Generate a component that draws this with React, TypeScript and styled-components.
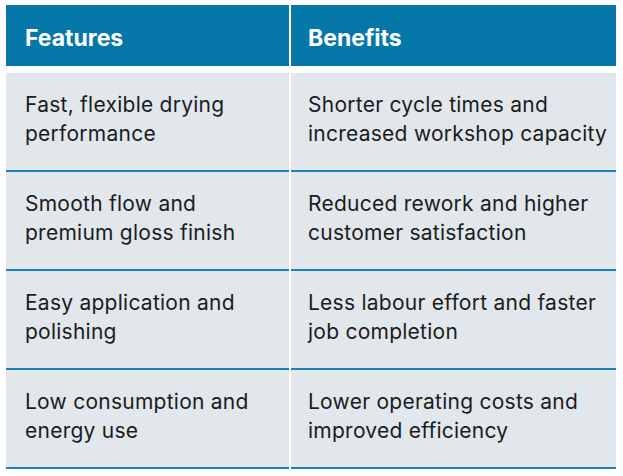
import React from "react";
import styled, { createGlobalStyle } from "styled-components";

const GlobalStyle = createGlobalStyle`
    html, body {
        margin: 0;
        padding: 0;
        background: #ffffff;
    }
`;

const Page = styled.div`
    padding: 5px 7px 0 6px;
    font-family: Inter, "Liberation Sans", Arial, sans-serif;
`;

const Table = styled.div`
    display: grid;
    grid-template-columns: 283px 325px;
    column-gap: 2px;
    width: 610px;
`;

interface CellProps {
    isRight?: boolean;
}

const HeaderCell = styled.div<CellProps>`
    height: 61px;
    box-sizing: border-box;
    padding: ${(props) => (props.isRight ? "20px 0 0 17px" : "20px 0 0 19px")};
    background-color: #0577a9;
    color: #ffffff;
    font-size: 23px;
    line-height: 26px;
    font-weight: 700;
    margin-bottom: 7px;
`;

const BodyCell = styled.div<CellProps>`
    height: 99px;
    box-sizing: border-box;
    padding: ${(props) => (props.isRight ? "18px 0 0 17px" : "18px 0 0 19px")};
    background-color: #e1e7eb;
    border-bottom: 2px solid #1a82bb;
    color: #1b1c1e;
    font-size: 21px;
    line-height: 28.5px;
    font-weight: 400;
    letter-spacing: 0.25px;
    white-space: nowrap;
`;

const Line = styled.span`
    display: block;
`;

const rows = [
    [
        ["Fast, flexible drying", "performance"],
        ["Shorter cycle times and", "increased workshop capacity"],
    ],
    [
        ["Smooth flow and", "premium gloss finish"],
        ["Reduced rework and higher", "customer satisfaction"],
    ],
    [
        ["Easy application and", "polishing"],
        ["Less labour effort and faster", "job completion"],
    ],
    [
        ["Low consumption and", "energy use"],
        ["Lower operating costs and", "improved efficiency"],
    ],
];

const App: React.FC = () => {
    return (
        <Page>
            <GlobalStyle />
            <Table>
                <HeaderCell>Features</HeaderCell>
                <HeaderCell isRight>Benefits</HeaderCell>
                {rows.map((row, i) => (
                    <React.Fragment key={i}>
                        <BodyCell>
                            {row[0].map((line, j) => (
                                <Line key={j}>{line}</Line>
                            ))}
                        </BodyCell>
                        <BodyCell isRight>
                            {row[1].map((line, j) => (
                                <Line key={j}>{line}</Line>
                            ))}
                        </BodyCell>
                    </React.Fragment>
                ))}
            </Table>
        </Page>
    );
};

export default App;
